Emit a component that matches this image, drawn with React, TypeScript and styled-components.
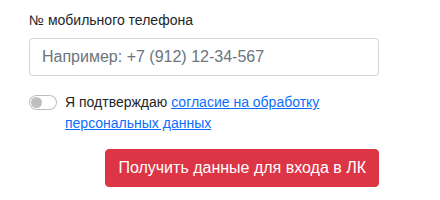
import styled, { createGlobalStyle } from "styled-components";
import { useState } from "react";

const GlobalStyle = createGlobalStyle`
  body {
    margin: 0;
    background: #fff;
    font-family: "Liberation Sans", Arial, sans-serif;
    color: #212529;
  }
`;

const Form = styled.form`
  width: 350px;
  padding: 10px 0 0 29px;
  display: flex;
  flex-direction: column;
`;

const Label = styled.label`
  font-size: 14px;
  line-height: 21px;
  margin-bottom: 7px;
  color: #212529;
`;

const PhoneInput = styled.input`
  box-sizing: border-box;
  width: 100%;
  height: 38px;
  padding: 6px 12px;
  font-family: inherit;
  font-size: 16px;
  line-height: 24px;
  color: #495057;
  border: 1px solid #ced4da;
  border-radius: 4px;
  outline: none;

  &::placeholder {
    color: #6c757d;
  }
`;

const CheckRow = styled.div`
  display: flex;
  align-items: flex-start;
  margin-top: 16px;
  font-size: 14px;
  line-height: 21px;
`;

const Switch = styled.button<{ $on: boolean }>`
  flex: none;
  position: relative;
  width: 28px;
  height: 15px;
  margin: 3px 8px 0 0;
  padding: 0;
  border: 1px solid rgba(0, 0, 0, 0.25);
  border-radius: 8px;
  background: ${(p) => (p.$on ? "#0d6efd" : "#fff")};
  cursor: pointer;

  &::after {
    content: "";
    position: absolute;
    top: 1px;
    left: ${(p) => (p.$on ? "14px" : "1px")};
    width: 11px;
    height: 11px;
    border-radius: 50%;
    background: ${(p) => (p.$on ? "#fff" : "#bfbfbf")};
  }
`;

const Link = styled.a`
  color: #0d6efd;
  text-decoration: underline;
`;

const Actions = styled.div`
  display: flex;
  justify-content: flex-end;
  margin-top: 15px;
`;

const SubmitButton = styled.button`
  height: 38px;
  padding: 6px 12px;
  font-family: inherit;
  font-size: 16px;
  line-height: 24px;
  color: #fff;
  background: #dc3545;
  border: 1px solid #dc3545;
  border-radius: 4px;
  cursor: pointer;
`;

export default function App() {
  const [agree, setAgree] = useState(false);
  const [phone, setPhone] = useState("");

  return (
    <>
      <GlobalStyle />
      <Form onSubmit={(e) => e.preventDefault()}>
        <Label htmlFor="phone">№ мобильного телефона</Label>
        <PhoneInput
          id="phone"
          value={phone}
          placeholder="Например: +7 (912) 12-34-567"
          onChange={(e) => setPhone(e.target.value)}
        />
        <CheckRow>
          <Switch type="button" $on={agree} onClick={() => setAgree(!agree)} />
          <span>
            Я подтверждаю <Link href="#">согласие на обработку персональных данных</Link>
          </span>
        </CheckRow>
        <Actions>
          <SubmitButton type="submit">Получить данные для входа в ЛК</SubmitButton>
        </Actions>
      </Form>
    </>
  );
}
